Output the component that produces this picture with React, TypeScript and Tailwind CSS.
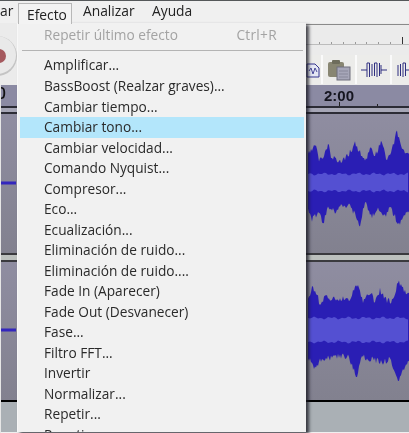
const F = '"Open Sans", "Noto Sans", sans-serif';

const items = [
  "Amplificar...",
  "BassBoost (Realzar graves)...",
  "Cambiar tiempo...",
  "Cambiar tono...",
  "Cambiar velocidad...",
  "Comando Nyquist...",
  "Compresor...",
  "Eco...",
  "Ecualización...",
  "Eliminación de ruido...",
  "Eliminación de ruido....",
  "Fade In (Aparecer)",
  "Fade Out (Desvanecer)",
  "Fase...",
  "Filtro FFT...",
  "Invertir",
  "Normalizar...",
  "Repetir...",
  "Repetir...",
];

type P = [number, number];
const t1Top: P[] = [[38,60],[50,50],[65,45],[72,85],[85,75],[100,40],[110,80],[120,70],[130,95],[145,85],[160,70],[180,35],[195,60],[215,85],[225,45],[240,70],[260,30],[275,80],[290,60],[305,0],[320,50],[340,70]];
const t1Bot: P[] = [[38,240],[50,280],[70,260],[85,290],[100,240],[120,260],[140,235],[165,240],[195,295],[210,225],[230,270],[250,250],[270,270],[285,240],[310,295],[340,255]];
const t2Top: P[] = [[38,60],[50,15],[65,30],[75,75],[90,45],[105,50],[125,50],[150,50],[165,50],[185,5],[205,60],[225,30],[240,60],[255,25],[275,55],[290,60],[310,0],[340,40]];
const t2Bot: P[] = [[38,240],[60,280],[75,250],[90,250],[120,240],[160,240],[185,300],[200,240],[230,250],[260,260],[285,250],[310,315],[340,250]];

function sample(pts: P[], zx: number) {
  for (let i = 0; i < pts.length - 1; i++) {
    if (zx >= pts[i][0] && zx <= pts[i + 1][0]) {
      const t = (zx - pts[i][0]) / (pts[i + 1][0] - pts[i][0]);
      return pts[i][1] + t * (pts[i + 1][1] - pts[i][1]);
    }
  }
  return pts[pts.length - 1][1];
}

function wavePath(top: P[], bot: P[], y0: number, seed: number) {
  const up: string[] = [];
  const down: string[] = [];
  for (let x = 308; x <= 409; x += 1) {
    const zx = (x - 295) * 3;
    const n1 = Math.sin(x * 12.9898 + seed) * 43758.5453;
    const n2 = Math.sin(x * 78.233 + seed) * 12345.678;
    const j1 = (n1 - Math.floor(n1)) * 6;
    const j2 = (n2 - Math.floor(n2)) * 6;
    up.push(x + "," + (y0 + sample(top, zx) / 3 + j1).toFixed(1));
    down.unshift(x + "," + (y0 + sample(bot, zx) / 3 - j2).toFixed(1));
  }
  return up.concat(down).join(" ");
}

function corePath(cy: number, h1: number, h2: number, seed: number) {
  const up: string[] = [];
  const down: string[] = [];
  for (let x = 308; x <= 409; x += 2) {
    const a = Math.sin(x * 0.37 + seed) + Math.sin(x * 0.91 + seed);
    up.push(x + "," + (cy - h1 - a * 0.8).toFixed(1));
    down.unshift(x + "," + (cy + h2 + a * 0.8).toFixed(1));
  }
  return up.concat(down).join(" ");
}

function Track({ y, h, y0, cy, top, bot, seed, h1, h2 }: { y: number; h: number; y0: number; cy: number; top: P[]; bot: P[]; seed: number; h1: number; h2: number }) {
  return (
    <div className="flex justify-between bg-gradient-to-b from-[#8f8da1] to-[#82818f]" style={{ height: h }}>
      <svg width="17" height={h} viewBox={"0 " + y + " 17 " + h} className="block">
        <rect x="1" y={cy - 1.5} width="15" height="3" fill="#3326bd" />
      </svg>
      <svg width="103" height={h} viewBox={"306 " + y + " 103 " + h} className="block">
        <polygon points={wavePath(top, bot, y0, seed)} fill="#2a1eb4" />
        <polygon points={corePath(cy, h1, h2, seed)} fill="#5450d2" />
      </svg>
    </div>
  );
}

function ToolButton({ w, children }: { w: string; children: React.ReactNode }) {
  return <div className={"flex items-center justify-center bg-[#ececea] border-r-2 border-[#fafafa] " + w}>{children}</div>;
}

export default function App() {
  return (
    <div className="relative w-[409px] h-[433px] overflow-hidden bg-[#f0f0f0] blur-[0.45px]" style={{ fontFamily: F }}>
      <div className="h-px bg-[#55585a]" />
      <div className="h-[22px] bg-[#f0f0f0] flex items-center text-[13.8px] text-[#222] leading-none">
        <span className="w-[83px] pb-[2px]">ar</span>
        <span className="w-[69px] pb-[2px]">Analizar</span>
        <span className="pb-[2px]">Ayuda</span>
      </div>

      <div className="h-[62px] flex justify-between bg-[#ebebeb]">
        <svg width="18" height="62" viewBox="0 23 18 62" className="block">
          <circle cx="-3" cy="56" r="20" fill="#c4c4c4" />
          <circle cx="-3" cy="55" r="19" fill="#e9e9e9" />
          <circle cx="-1" cy="56" r="7" fill="#a5595e" />
        </svg>
        <div className="w-[103px] flex flex-col">
          <div className="h-[20px] border-t border-[#8a8a8a] mt-px" />
          <div className="h-0 border-b border-[#bcbcbc] flex justify-around items-end pl-2 pr-px">
            {[0, 1, 2, 3, 4, 5, 6].map((i) => (
              <span key={i} className="w-px h-[2px] bg-[#999]" />
            ))}
            <span className="w-px h-[7px] bg-[#333]" />
          </div>
          <div className="h-[29px] mt-[10px] flex bg-[#fafafa]">
            <ToolButton w="w-[17px] justify-start">
              <svg width="14" height="20" viewBox="0 0 14 20" fill="none">
                <path d="M1 4h8l4 4v9H1z" fill="#e4e7f4" stroke="#35358e" />
                <path d="M3 11 L5 8 L7 14 L9 8 L11 12" stroke="#4a4a9a" />
              </svg>
            </ToolButton>
            <ToolButton w="w-[34px]">
              <svg width="24" height="22" viewBox="0 0 24 22">
                <rect x="1" y="3" width="16" height="15" rx="2" fill="#888672" />
                <rect x="5" y="1" width="8" height="4" rx="1" fill="#6e6d5c" />
                <rect x="10" y="8" width="13" height="13" fill="#a6a6b8" stroke="#6f6f7c" />
                <path d="M12 12h9M12 15h9M12 18h9" stroke="#88889a" />
              </svg>
            </ToolButton>
            <ToolButton w="w-[35px]">
              <svg width="26" height="20" viewBox="0 0 26 20" fill="none" stroke="#2f2f80" strokeWidth="1">
                <path d="M0 10h6M20 10h6M6 3v14M8.5 3v14M11 4v12M13.5 3v13M16 3v14M18.5 3v13M20 5v9M6 3h2.5M13.5 3h2.5" />
              </svg>
            </ToolButton>
            <div className="flex-1 flex items-center justify-start pl-[5px] bg-[#ececea]">
              <svg width="12" height="20" viewBox="0 0 12 20" fill="none" stroke="#2f2f80" strokeWidth="1">
                <path d="M1 5v11M3.5 4v12M6 3v14M8.5 3v13M6 3h2.5M8.5 10h4" />
              </svg>
            </div>
          </div>
        </div>
      </div>

      <div className="h-[21px] flex justify-between bg-[#8b8aa3]">
        <span className="text-[#111] text-[16px] font-semibold leading-none w-[6px] overflow-hidden flex justify-end">0</span>
        <div className="w-[85px] relative">
          <span className="block text-[15px] leading-none font-semibold text-[#15151f] pt-[3px]" style={{ fontFamily: '"Liberation Sans", sans-serif' }}>2:00</span>
          <span className="absolute left-[15px] bottom-0 w-px h-[4px] bg-[#222]" />
          <span className="absolute left-[53px] bottom-0 w-px h-[2px] bg-[#222]" />
        </div>
      </div>
      <div className="h-[2px] bg-[#2b2b35]" />
      <div className="h-[4px] bg-[#a6a6b6]" />
      <div className="h-[2px] bg-[#2c2c35]" />

      <Track y={115} h={139} y0={130} cy={184} top={t1Top} bot={t1Bot} seed={1.2} h1={9} h2={8} />
      <div className="h-[2px] bg-[#3a3a3e]" />
      <div className="h-[5px] bg-[#bcc0bd]" />
      <div className="h-[2px] bg-[#3a3a3e]" />
      <Track y={263} h={138} y0={280} cy={331} top={t2Top} bot={t2Bot} seed={4.7} h1={12} h2={12} />
      <div className="h-[2px] bg-black" />
      <div className="h-[30px] bg-[#aab0b5]" />

      <div className="absolute left-0 top-[85px] bottom-0 w-px bg-[#e6e6e6]" />

      <div className="absolute left-[18px] top-[3px] w-[54px] h-[21px] border border-b-0 border-[#b8b8b8] bg-[#f3f3f3] z-20 text-[13.8px] text-[#222] pl-[8px] pt-[2px] leading-[17px]">
        Efecto
      </div>

      <div className="absolute left-[17px] top-[23px] w-[289px] h-[409px] overflow-hidden bg-[#f1f1f1] border-l border-[#f8f8f8] shadow-[3px_2px_3px_rgba(20,20,30,0.75)] z-10 text-[13.7px] text-[#2a2a2a]">
        <div className="h-[25px] flex justify-between items-center pl-[26px] pr-[29px] text-[#a3a3a3]">
          <span>Repetir último efecto</span>
          <span className="tracking-[0.3px]">Ctrl+R</span>
        </div>
        <div className="h-px mt-[2px] mb-[3px] ml-[4px] mr-[3px] bg-[#b4b4b4]" />
        <div className="pt-[1.5px]">
          {items.map((t, i) => (
            <div
              key={i}
              className={"h-[20.53px] flex items-center pl-[24px] mx-[2px] " + (i === 3 ? "bg-[#b3e6fb]" : "")}
            >
              {t}
            </div>
          ))}
        </div>
      </div>
    </div>
  );
}
